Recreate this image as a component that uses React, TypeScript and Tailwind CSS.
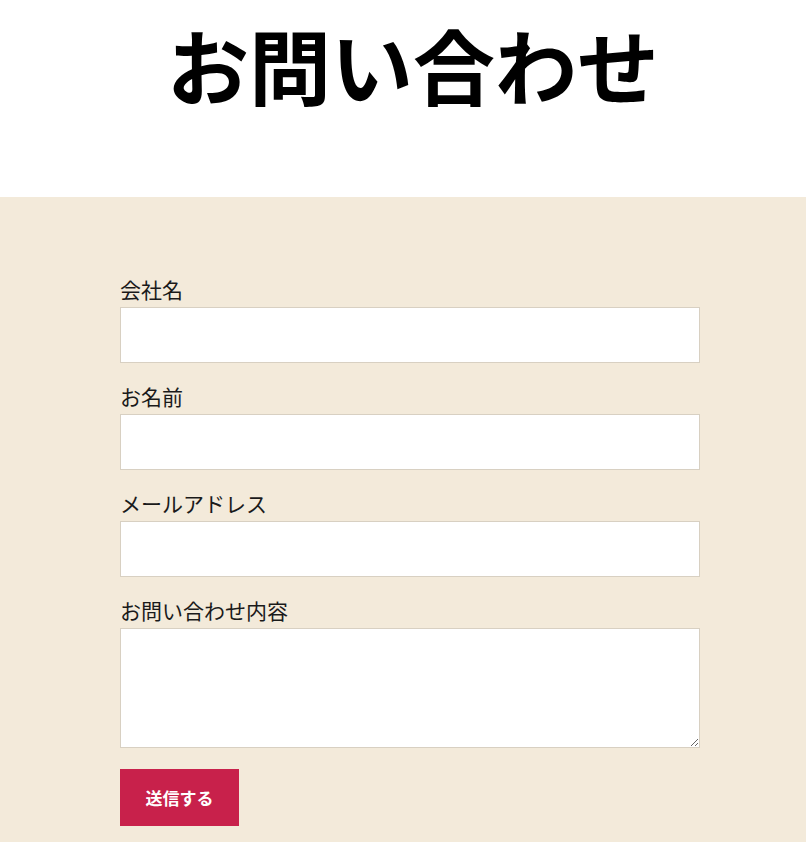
import React from "react";

const font = { fontFamily: '"Noto Sans CJK JP", "Noto Sans", sans-serif' };

function Field({ label, multiline }: { label: string; multiline?: boolean }) {
  return (
    <div className="flex flex-col">
      <label className="text-[21px] leading-[27px] mb-[4px] text-[#1a1a1a]">{label}</label>
      {multiline ? (
        <textarea className="block w-full h-[120px] bg-white border border-[#d8d0c2] outline-none" />
      ) : (
        <input type="text" className="block w-full h-[56px] bg-white border border-[#d8d0c2] outline-none" />
      )}
    </div>
  );
}

export default function App() {
  return (
    <div className="w-[806px] min-h-[842px] bg-[#f3eada]" style={font}>
      <div className="h-[197px] bg-white flex justify-center pl-[20px]">
        <h1 className="pt-[23px] text-[82px] leading-none font-bold text-black">お問い合わせ</h1>
      </div>
      <div className="pt-[79px] px-[120px] pb-[16px]">
        <div className="w-[580px] flex flex-col gap-[20px]">
          <Field label="会社名" />
          <Field label="お名前" />
          <Field label="メールアドレス" />
          <Field label="お問い合わせ内容" multiline />
        </div>
        <button className="mt-[21px] w-[119px] h-[57px] bg-[#c8214b] text-white text-[17px] font-bold">
          送信する
        </button>
      </div>
    </div>
  );
}
